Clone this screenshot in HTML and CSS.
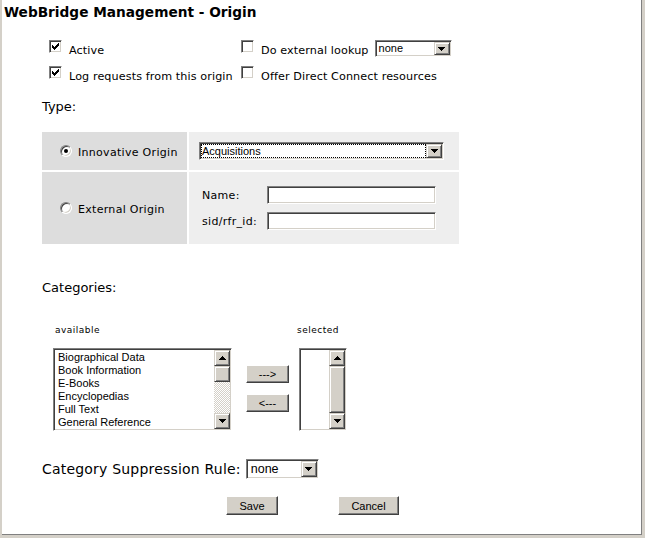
FILE: index.html
```html
<!DOCTYPE html>
<html>
<head>
<meta charset="utf-8">
<title>WebBridge Management - Origin</title>
<link rel="stylesheet" href="styles.css">
</head>
<body>
<div class="frame">
<div class="page">
  <h1 class="title">WebBridge Management - Origin</h1>

  <div class="opts">
    <div class="opt">
      <span class="cb"><svg class="check" width="7" height="7" viewBox="0 0 7 7"><path d="M0 2h1v3H0zM1 3h1v3H1zM2 4h1v3H2zM3 3h1v3H3zM4 2h1v3H4zM5 1h1v3H5zM6 0h1v3H6z"/></svg></span>
      <span class="opt-text">Active</span>
    </div>
    <div class="opt">
      <span class="cb"></span>
      <span class="opt-text">Do external lookup</span>
      <span class="sel sel-lookup"><span class="sel-text">none</span><span class="sel-btn"><svg width="7" height="4" viewBox="0 0 7 4"><path d="M0 0h7v1H6v1H5v1H4v1H3V3H2V2H1V1H0z"/></svg></span></span>
    </div>
    <div class="opt">
      <span class="cb"><svg class="check" width="7" height="7" viewBox="0 0 7 7"><path d="M0 2h1v3H0zM1 3h1v3H1zM2 4h1v3H2zM3 3h1v3H3zM4 2h1v3H4zM5 1h1v3H5zM6 0h1v3H6z"/></svg></span>
      <span class="opt-text">Log requests from this origin</span>
    </div>
    <div class="opt">
      <span class="cb"></span>
      <span class="opt-text">Offer Direct Connect resources</span>
    </div>
  </div>

  <div class="heading type-heading">Type:</div>

  <div class="type">
    <div class="tl">
      <span class="radio"><span class="dot"></span></span>
      <span class="radio-text">Innovative Origin</span>
    </div>
    <div class="tr tr1">
      <span class="sel sel-acq"><span class="sel-text focus">Acquisitions</span><span class="sel-btn"><svg width="7" height="4" viewBox="0 0 7 4"><path d="M0 0h7v1H6v1H5v1H4v1H3V3H2V2H1V1H0z"/></svg></span></span>
    </div>
    <div class="tl">
      <span class="radio"></span>
      <span class="radio-text">External Origin</span>
    </div>
    <div class="tr tr2">
      <span class="field-label">Name:</span>
      <span class="input"></span>
      <span class="field-label">sid/rfr_id:</span>
      <span class="input"></span>
    </div>
  </div>

  <div class="heading cat-heading">Categories:</div>

  <div class="cats">
    <div class="col">
      <div class="lbl">available</div>
      <div class="list list-avail">
        <div class="items">
          <div>Biographical Data</div>
          <div>Book Information</div>
          <div>E-Books</div>
          <div>Encyclopedias</div>
          <div>Full Text</div>
          <div>General Reference</div>
        </div>
        <div class="sb">
          <span class="sb-btn"><svg width="7" height="4" viewBox="0 0 7 4"><path d="M3 0h1v1h1v1h1v1h1v1H0V3h1V2h1V1h1z"/></svg></span>
          <span class="sb-thumb"></span>
          <span class="sb-track"></span>
          <span class="sb-btn"><svg width="7" height="4" viewBox="0 0 7 4"><path d="M0 0h7v1H6v1H5v1H4v1H3V3H2V2H1V1H0z"/></svg></span>
        </div>
      </div>
    </div>
    <div class="col mid">
      <button class="btn move">---&gt;</button>
      <button class="btn move">&lt;---</button>
    </div>
    <div class="col sel-col">
      <div class="lbl lbl-sel">selected</div>
      <div class="list list-sel">
        <div class="items"></div>
        <div class="sb">
          <span class="sb-btn"><svg width="7" height="4" viewBox="0 0 7 4"><path d="M3 0h1v1h1v1h1v1h1v1H0V3h1V2h1V1h1z"/></svg></span>
          <span class="sb-thumb sb-thumb-full"></span>
          <span class="sb-btn"><svg width="7" height="4" viewBox="0 0 7 4"><path d="M0 0h7v1H6v1H5v1H4v1H3V3H2V2H1V1H0z"/></svg></span>
        </div>
      </div>
    </div>
  </div>

  <div class="suppress">
    <span class="suppress-text">Category Suppression Rule:</span>
    <span class="sel sel-rule"><span class="sel-text">none</span><span class="sel-btn"><svg width="7" height="4" viewBox="0 0 7 4"><path d="M0 0h7v1H6v1H5v1H4v1H3V3H2V2H1V1H0z"/></svg></span></span>
  </div>

  <div class="actions">
    <button class="btn save">Save</button>
    <button class="btn cancel">Cancel</button>
  </div>
</div>
</div>
</body>
</html>
```

FILE: styles.css
```css
* { box-sizing: border-box; }

body {
  margin: 0;
  font-family: "DejaVu Sans", Verdana, sans-serif;
  font-size: 11px;
  color: #000;
  background: #fff;
}

.frame {
  width: 645px;
  height: 538px;
  border-left: 2px solid #d4d0c8;
  border-right: 3px solid #d4d0c8;
  border-bottom: 3px solid #d4d0c8;
  background: #fff;
}

.page {
  height: 100%;
  border-right: 1px solid #808080;
  border-bottom: 1px solid #808080;
  padding-top: 4px;
}

.title {
  margin: 0 0 0 2px;
  font-size: 13.7px;
  font-weight: bold;
  line-height: 16px;
}

/* ---------- options ---------- */
.opts {
  display: grid;
  grid-template-columns: 192px auto;
  row-gap: 9px;
  margin: 20px 0 0 47px;
}

.opt {
  display: flex;
  align-items: flex-end;
  gap: 7px;
  height: 17px;
  font-size: 11.2px;
  letter-spacing: 0.1px;
  line-height: 13px;
  white-space: nowrap;
}

.cb {
  flex: none;
  width: 13px;
  height: 13px;
  margin-bottom: 4px;
  padding: 1px;
  background: #fff;
  border: 1px solid;
  border-color: #808080 #fff #fff #808080;
  box-shadow: inset 1px 1px #404040, inset -1px -1px #d4d0c8;
}

.check {
  display: block;
  margin: 1px;
  shape-rendering: crispEdges;
}

/* ---------- select-like controls ---------- */
.sel {
  display: flex;
  flex: none;
  padding: 1px;
  background: #fff;
  border: 1px solid;
  border-color: #808080 #fff #fff #808080;
  box-shadow: inset 1px 1px #404040, inset -1px -1px #d4d0c8;
  font-family: "Liberation Sans", Arial, sans-serif;
  font-size: 11px;
  letter-spacing: 0;
}

.sel-text {
  flex: 1;
  display: flex;
  align-items: center;
  padding-left: 2px;
  white-space: nowrap;
}

.sel-text.focus {
  outline: 1px dotted #000;
  outline-offset: -1px;
  padding-left: 1px;
}

.sel-btn {
  flex: none;
  width: 16px;
  display: flex;
  align-items: center;
  justify-content: center;
  background: #d4d0c8;
  border: 1px solid;
  border-color: #d4d0c8 #404040 #404040 #d4d0c8;
  box-shadow: inset 1px 1px #fff, inset -1px -1px #808080;
}

.sel-btn svg, .sb-btn svg { shape-rendering: crispEdges; display: block; }

.sel-lookup {
  width: 77px;
  height: 17px;
  margin-left: -1px;
}

.sel-acq {
  width: 245px;
  height: 18px;
}

.sel-rule {
  width: 73px;
  height: 20px;
  font-size: 12.5px;
}

.sel-rule .sel-text { padding-left: 3px; }

/* ---------- headings ---------- */
.heading {
  font-size: 13px;
  line-height: 16px;
  margin-left: 40px;
}

.type-heading { margin-top: 16px; }
.cat-heading { margin-top: 36px; }

/* ---------- type grid ---------- */
.type {
  display: grid;
  grid-template-columns: 145px 270px;
  grid-template-rows: 38px 72px;
  gap: 2px;
  margin: 17px 0 0 40px;
  width: 417px;
}

.tl {
  background: #dddddd;
  display: flex;
  align-items: center;
  padding-left: 18px;
  gap: 5px;
}

.tr { background: #eeeeee; }

.tr1 {
  display: flex;
  align-items: center;
  padding-left: 10px;
}

.tr2 {
  display: grid;
  grid-template-columns: 65px 169px;
  grid-template-rows: 18px 18px;
  row-gap: 8px;
  align-content: center;
  align-items: center;
  padding-left: 13px;
}

.radio {
  flex: none;
  width: 12px;
  height: 12px;
  border-radius: 50%;
  background: #fff;
  border: 1px solid;
  border-color: #808080 #fff #fff #808080;
  box-shadow: inset 1px 1px #404040, inset -1px -1px #d4d0c8;
  display: flex;
  align-items: center;
  justify-content: center;
}

.dot {
  width: 4px;
  height: 4px;
  border-radius: 50%;
  background: #000;
}

.radio-text {
  margin-top: 2px;
  margin-left: 1px;
  white-space: nowrap;
  letter-spacing: 0.3px;
}

.field-label {
  white-space: nowrap;
  letter-spacing: 0.3px;
}

.input {
  display: block;
  height: 18px;
  background: #fff;
  border: 1px solid;
  border-color: #808080 #fff #fff #808080;
  box-shadow: inset 1px 1px #404040, inset -1px -1px #d4d0c8;
}

/* ---------- categories ---------- */
.cats {
  display: flex;
  margin: 29px 0 0 51px;
}

.col {
  display: flex;
  flex-direction: column;
}

.lbl {
  font-size: 9px;
  line-height: 11px;
  letter-spacing: 0.5px;
  margin: 0 0 12px 2px;
  white-space: nowrap;
}

.lbl-sel { margin-left: -2px; }

.list {
  display: flex;
  height: 83px;
  padding: 1px;
  background: #fff;
  border: 1px solid;
  border-color: #808080 #fff #fff #808080;
  box-shadow: inset 1px 1px #404040, inset -1px -1px #d4d0c8;
}

.list-avail { width: 179px; }
.list-sel { width: 48px; }

.items {
  flex: 1;
  overflow: hidden;
  padding: 1px 0 0 3px;
  font-family: "Liberation Sans", Arial, sans-serif;
  font-size: 11px;
  line-height: 13px;
  white-space: nowrap;
}

.sb {
  flex: none;
  width: 16px;
  display: flex;
  flex-direction: column;
}

.sb-btn, .sb-thumb {
  flex: none;
  height: 16px;
  display: flex;
  align-items: center;
  justify-content: center;
  background: #d4d0c8;
  border: 1px solid;
  border-color: #d4d0c8 #404040 #404040 #d4d0c8;
  box-shadow: inset 1px 1px #fff, inset -1px -1px #808080;
}

.sb-thumb-full { flex: 1; }

.sb-track {
  flex: 1;
  background: repeating-conic-gradient(#d4d0c8 0 25%, #fff 0 50%) 0 0 / 2px 2px;
}

.mid {
  margin-left: 14px;
  padding-top: 40px;
  gap: 11px;
}

.sel-col { margin-left: 10px; }

.btn {
  display: flex;
  align-items: center;
  justify-content: center;
  padding: 0;
  margin: 0;
  font-family: "Liberation Sans", Arial, sans-serif;
  font-size: 11px;
  color: #000;
  background: #d4d0c8;
  border: 1px solid;
  border-color: #fff #404040 #404040 #fff;
  box-shadow: inset -1px -1px #808080;
  border-radius: 0;
}

.move {
  width: 43px;
  height: 18px;
}

/* ---------- bottom ---------- */
.suppress {
  display: flex;
  align-items: center;
  gap: 5px;
  margin: 28px 0 0 40px;
  font-size: 14px;
  line-height: 16px;
}

.suppress-text { letter-spacing: 0.2px; }

.actions {
  display: flex;
  gap: 60px;
  margin: 17px 0 0 224px;
}

.save { width: 52px; height: 19px; }
.cancel { width: 61px; height: 19px; }
```
